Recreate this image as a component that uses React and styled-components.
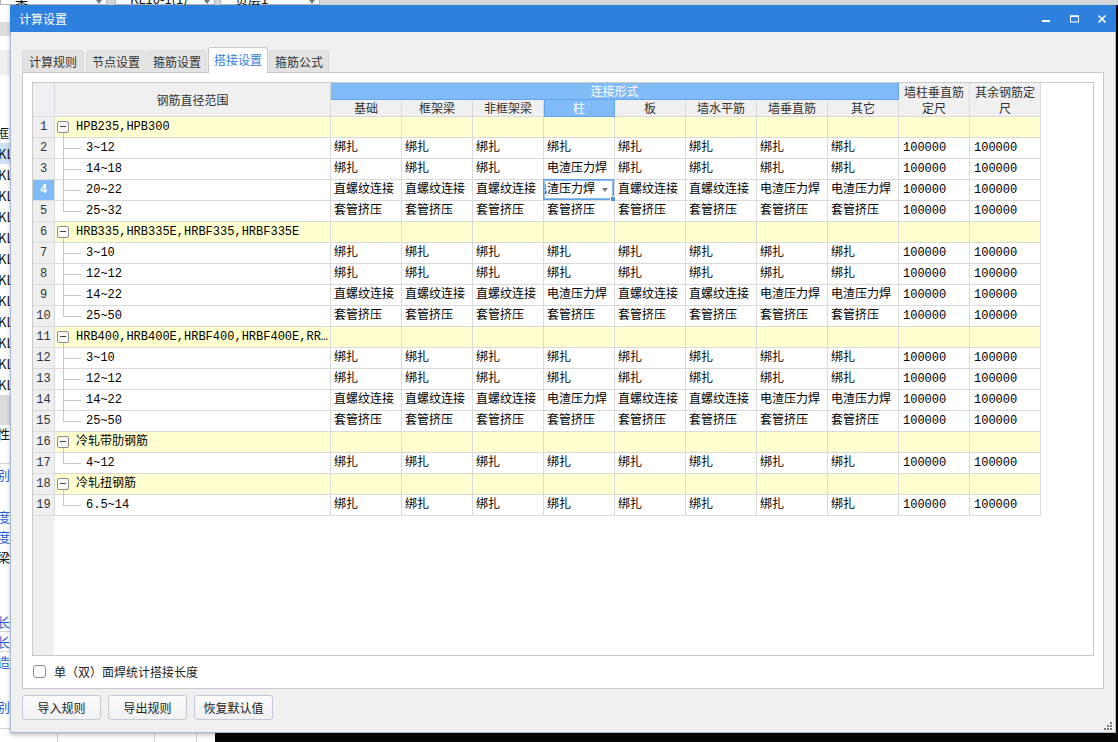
import React from "react";
import styled, { createGlobalStyle } from "styled-components";

const GlobalStyle = createGlobalStyle`
  html, body { margin: 0; padding: 0; }
  body {
    font-family: "Noto Sans CJK SC", "Noto Sans", sans-serif;
    font-size: 12px;
    color: #222;
  }
`;

const Screen = styled.div`
  position: relative;
  width: 1118px;
  height: 742px;
  overflow: hidden;
  background: #060606;
`;

/* ---------- the application behind the dialog ---------- */

const Backdrop = styled.div`
  display: flex;
  flex-direction: column;
  height: 100%;
`;

const TopStrip = styled.div`
  height: 5px;
  flex: none;
  display: flex;
  align-items: flex-end;
  background: #d4d6d9;
  overflow: hidden;
`;

const Combo = styled.div`
  width: ${({ $w }) => $w}px;
  margin-right: ${({ $gap }) => $gap}px;
  height: 20px;
  flex: none;
  box-sizing: border-box;
  background: #fff;
  border: 1px solid #b5b5b5;
  display: flex;
  align-items: flex-end;
  justify-content: space-between;
  padding: 0 4px 0 14px;
  font-size: 13px;
  line-height: 11px;
  color: #111;
`;

const Main = styled.div`
  flex: 1;
  display: flex;
  min-height: 0;
`;

const SidePane = styled.div`
  width: 215px;
  flex: none;
  background: #fff;
  display: flex;
  flex-direction: column;
  overflow: hidden;
`;

const SideRow = styled.div`
  height: ${({ $h }) => $h}px;
  flex: none;
  box-sizing: border-box;
  background: ${({ $bg }) => $bg || "#fff"};
  color: ${({ $blue }) => ($blue ? "#1a5fd6" : "#111")};
  font-size: 13px;
  line-height: ${({ $h }) => $h}px;
  white-space: nowrap;
  text-indent: ${({ $indent }) => $indent ?? -3}px;
  border-bottom: ${({ $line }) => ($line ? "1px solid #d6d6d6" : "none")};
`;

const SideGrid = styled.div`
  flex: 1;
  display: flex;
  border-top: 1px solid #d6d6d6;
`;

const SideCell = styled.div`
  width: ${({ $w }) => $w}px;
  flex: none;
  border-right: 1px solid #d2d2d2;
`;

const DarkArea = styled.div`
  flex: 1;
  background: #060606;
`;

/* ---------- dialog ---------- */

const Dialog = styled.div`
  position: absolute;
  left: 10px;
  top: 5px;
  width: 1106px;
  height: 728px;
  display: flex;
  flex-direction: column;
  box-shadow: 0 2px 4px rgba(0, 0, 0, 0.25);
`;

const TitleBar = styled.div`
  height: 27px;
  flex: none;
  background: #2e80df;
  color: #fff;
  display: flex;
  align-items: center;
  padding-left: 9px;
  font-size: 12px;
`;

const Title = styled.span`
  flex: 1;
  line-height: 27px;
`;

const WinButton = styled.div`
  width: 28px;
  height: 27px;
  display: flex;
  align-items: center;
  justify-content: center;
`;

const Body = styled.div`
  position: relative;
  flex: 1;
  background: #f0f0f0;
  border: 1px solid #a9bad2;
  border-top: none;
  padding: 15px 11px 0 11px;
  display: flex;
  flex-direction: column;
`;

const TabBar = styled.div`
  height: 26px;
  flex: none;
  display: flex;
  align-items: flex-end;
  gap: 1px;
  margin-bottom: -1px;
  position: relative;
  z-index: 1;
`;

const Tab = styled.div`
  width: ${({ $first }) => ($first ? 62 : 60)}px;
  margin-right: ${({ $first }) => ($first ? 1 : 0)}px;
  height: ${({ $active }) => ($active ? 26 : 22)}px;
  margin-bottom: ${({ $active }) => ($active ? 0 : 1)}px;
  box-sizing: border-box;
  text-align: center;
  border: 1px solid ${({ $active }) => ($active ? "#c9c9c9" : "#d9d9d9")};
  border-bottom: none;
  border-radius: 3px 3px 0 0;
  background: ${({ $active }) => ($active ? "#fff" : "#e3e3e3")};
  color: ${({ $active }) => ($active ? "#2e80df" : "#333")};
  font-size: 12px;
  line-height: ${({ $active }) => ($active ? 24 : 21)}px;
`;

const Panel = styled.div`
  background: #fff;
  border: 1px solid #c9c9c9;
  padding: 9px 9px 4px 9px;
`;

const Grid = styled.div`
  height: 574px;
  box-sizing: border-box;
  border: 1px solid #c9c9c9;
  background: linear-gradient(to right, #efefef 21px, #fff 21px);
  overflow: hidden;
`;

const Table = styled.table`
  border-collapse: separate;
  border-spacing: 0;
  table-layout: fixed;
  width: 1008px;
  font-family: "Liberation Mono", "Noto Sans CJK SC", monospace;
  font-size: 12px;
  color: #000;
`;

const Col = styled.col`
  width: ${({ $w }) => $w}px;
`;

const Head = styled.th`
  height: 16px;
  padding: 0;
  font-family: "Noto Sans CJK SC", sans-serif;
  font-weight: normal;
  font-size: 12px;
  line-height: 16px;
  text-align: center;
  color: ${({ $blue }) => ($blue ? "#fff" : "#333")};
  background: ${({ $blue, $corner }) => ($blue ? "#80bbf7" : $corner ? "#eef0f4" : "#f0f0f0")};
  border-right: 1px solid ${({ $blue }) => ($blue ? "#63a4ec" : "#dadada")};
  border-bottom: 1px solid ${({ $blue }) => ($blue ? "#63a4ec" : "#dadada")};
  box-shadow: ${({ $picked }) => ($picked ? "inset 1px 0 0 #63a4ec" : "none")};
`;

const RowNo = styled.td`
  height: 20px;
  padding: 0;
  text-align: center;
  line-height: 20px;
  background: ${({ $picked }) => ($picked ? "#80bbf7" : "#efefef")};
  color: ${({ $picked }) => ($picked ? "#fff" : "#333")};
  font-weight: ${({ $picked }) => ($picked ? "bold" : "normal")};
  border-right: 1px solid #dadada;
  border-bottom: 1px solid #dadada;
`;

const Cell = styled.td`
  position: relative;
  height: 20px;
  padding: 0 0 0 ${({ $pad }) => $pad ?? 3}px;
  line-height: 20px;
  white-space: nowrap;
  overflow: ${({ $visible }) => ($visible ? "visible" : "hidden")};
  background: ${({ $group }) => ($group ? "#ffffd0" : "#fff")};
  border-right: 1px solid #dadada;
  border-bottom: 1px solid #dadada;
`;

const Tree = styled.div`
  display: flex;
  align-items: center;
  height: 20px;
`;

const ExpandBox = styled.span`
  position: relative;
  width: 12px;
  height: 12px;
  flex: none;
  box-sizing: border-box;
  margin-left: 2px;
  margin-right: 7px;
  border: 1px solid #8e8e8e;
  border-radius: 2px;
  background: #fafafa;

  &::before {
    content: "";
    position: absolute;
    left: 2px;
    top: 4px;
    width: 6px;
    height: 1px;
    background: #444;
  }
  &::after {
    content: "";
    position: absolute;
    left: 5px;
    top: 11px;
    width: 1px;
    height: 6px;
    background: #c8c8c8;
  }
`;

const Branch = styled.span`
  position: relative;
  width: 26px;
  height: 20px;
  flex: none;
  margin-left: 2px;
  margin-right: 3px;

  &::before {
    content: "";
    position: absolute;
    left: 6px;
    top: -1px;
    width: 1px;
    height: ${({ $last }) => ($last ? "11px" : "22px")};
    background: #c8c8c8;
  }
  &::after {
    content: "";
    position: absolute;
    left: 6px;
    top: 10px;
    width: 18px;
    height: 1px;
    background: #c8c8c8;
  }
`;

const NameText = styled.span`
  overflow: hidden;
  text-overflow: ellipsis;
  white-space: nowrap;
  flex: 1;
  min-width: 0;
`;

const Editor = styled.div`
  display: flex;
  align-items: center;
  justify-content: flex-end;
  height: 20px;
  overflow: hidden;
  padding-right: 6px;
  gap: 7px;
`;

const Caret = styled.span`
  flex: none;
  width: 0;
  height: 0;
  border-left: 3px solid transparent;
  border-right: 3px solid transparent;
  border-top: 4px solid #777;
`;

const Focus = styled.div`
  position: absolute;
  left: -1px;
  top: -1px;
  right: 0;
  bottom: 0;
  border: 1px solid #5f9fe6;
  box-shadow: inset 0 0 0 1px #8fc0f0;
  pointer-events: none;
`;

const Handle = styled.div`
  position: absolute;
  right: -3px;
  bottom: -3px;
  width: 4px;
  height: 4px;
  background: #4d92e0;
  border: 1px solid #fff;
`;

const CheckRow = styled.label`
  margin-top: 2px;
  height: 26px;
  display: flex;
  align-items: center;
  gap: 8px;
  padding-left: 1px;
  font-size: 12px;
  color: #222;
`;

const CheckBox = styled.span`
  width: 13px;
  height: 13px;
  box-sizing: border-box;
  border: 1px solid #8d8d8d;
  border-radius: 3px;
  background: #fff;
`;

const ButtonRow = styled.div`
  display: flex;
  gap: 7px;
  margin-top: 6px;
`;

const Button = styled.button`
  width: 79px;
  height: 25px;
  padding: 0;
  border: 1px solid #c3cad6;
  border-radius: 3px;
  background: linear-gradient(#fbfbfb, #f1f1f1);
  font-family: "Noto Sans CJK SC", sans-serif;
  font-size: 12px;
  color: #222;
`;

const Grip = styled.svg`
  position: absolute;
  right: 3px;
  bottom: 2px;
`;

/* ---------- data ---------- */

const COLS = ["基础", "框架梁", "非框架梁", "柱", "板", "墙水平筋", "墙垂直筋", "其它"];
const B = "绑扎";
const Z = "直螺纹连接";
const D = "电渣压力焊";
const T = "套管挤压";
const all = (v) => Array(8).fill(v);
const mixed = [Z, Z, Z, D, Z, Z, D, D];

const ROWS = [
  { group: "HPB235,HPB300" },
  { name: "3~12", vals: all(B) },
  { name: "14~18", vals: [B, B, B, D, B, B, B, B] },
  { name: "20~22", vals: mixed, picked: true },
  { name: "25~32", vals: all(T), last: true },
  { group: "HRB335,HRB335E,HRBF335,HRBF335E" },
  { name: "3~10", vals: all(B) },
  { name: "12~12", vals: all(B) },
  { name: "14~22", vals: mixed },
  { name: "25~50", vals: all(T), last: true },
  { group: "HRB400,HRB400E,HRBF400,HRBF400E,RRB400" },
  { name: "3~10", vals: all(B) },
  { name: "12~12", vals: all(B) },
  { name: "14~22", vals: mixed },
  { name: "25~50", vals: all(T), last: true },
  { group: "冷轧带肋钢筋" },
  { name: "4~12", vals: all(B), last: true },
  { group: "冷轧扭钢筋" },
  { name: "6.5~14", vals: all(B), last: true },
];

const SIDE = [
  { h: 17 },
  { h: 14, bg: "#dcdcdc" },
  { h: 14 },
  { h: 25, bg: "#efefef" },
  { h: 47 },
  { h: 21, text: "框架", indent: -4 },
  { h: 21, text: "KL10-1", bg: "#cde0f6", indent: -2 },
  ...Array(11).fill({ h: 21, text: "KL10-1", indent: -2 }),
  { h: 30, bg: "#dcdcdc" },
  { h: 18, text: "性" },
  { h: 21, line: true },
  { h: 21, text: "别", blue: true },
  { h: 21 },
  { h: 21, text: "度", blue: true },
  { h: 20, text: "度", blue: true },
  { h: 19, text: "梁" },
  { h: 46 },
  { h: 20, text: "长", blue: true, line: true },
  { h: 20, text: "长", blue: true, line: true },
  { h: 20, text: "造", blue: true },
  { h: 24 },
  { h: 21, text: "别", blue: true },
  { h: 11 },
];

const TABS = ["计算规则", "节点设置", "箍筋设置", "搭接设置", "箍筋公式"];

const MinIcon = () => (
  <svg width="10" height="10" viewBox="0 0 10 10">
    <rect x="1" y="6" width="8" height="2" fill="#fff" />
  </svg>
);

const MaxIcon = () => (
  <svg width="10" height="10" viewBox="0 0 10 10">
    <rect x="1.5" y="2" width="8" height="6" fill="none" stroke="#fff" strokeWidth="1" />
    <rect x="1" y="1.5" width="9" height="1.5" fill="#fff" />
  </svg>
);

const CloseIcon = () => (
  <svg width="10" height="10" viewBox="0 0 10 10">
    <path d="M1.5 1.5 L8.5 8.5 M8.5 1.5 L1.5 8.5" stroke="#fff" strokeWidth="1.6" />
  </svg>
);

const DataRow = ({ row, n }) => (
  <tr>
    <RowNo $picked={row.picked}>{n}</RowNo>
    {row.group ? (
      <>
        <Cell $group $visible $pad={0}>
          <Tree>
            <ExpandBox />
            <NameText>{row.group}</NameText>
          </Tree>
        </Cell>
        {Array.from({ length: 10 }).map((_, i) => (
          <Cell key={i} $group />
        ))}
      </>
    ) : (
      <>
        <Cell $visible $pad={0}>
          <Tree>
            <Branch $last={row.last} />
            <NameText>{row.name}</NameText>
          </Tree>
        </Cell>
        {row.vals.map((v, i) =>
          row.picked && i === 3 ? (
            <Cell key={i} $pad={0} $visible>
              <Editor>
                <span>{v}</span>
                <Caret />
              </Editor>
              <Focus>
                <Handle />
              </Focus>
            </Cell>
          ) : (
            <Cell key={i}>{v}</Cell>
          )
        )}
        <Cell $pad={4}>100000</Cell>
        <Cell $pad={4}>100000</Cell>
      </>
    )}
  </tr>
);

export default function App() {
  return (
    <Screen>
      <GlobalStyle />
      <Backdrop>
        <TopStrip>
          <Combo $w={107} $gap={8}>
            <span>梁</span>
            <Caret />
          </Combo>
          <Combo $w={100} $gap={5}>
            <span>KL10-1(1)</span>
            <Caret />
          </Combo>
          <Combo $w={100} $gap={0}>
            <span>负层1</span>
            <Caret />
          </Combo>
        </TopStrip>
        <Main>
          <SidePane>
            {SIDE.map((r, i) => (
              <SideRow
                key={i}
                $h={r.h}
                $bg={r.bg}
                $blue={r.blue}
                $line={r.line}
                $indent={r.indent}
              >
                {r.text}
              </SideRow>
            ))}
            <SideGrid>
              <SideCell $w={57} />
              <SideCell $w={96} />
              <SideCell $w={41} />
            </SideGrid>
          </SidePane>
          <DarkArea />
        </Main>
      </Backdrop>

      <Dialog>
        <TitleBar>
          <Title>计算设置</Title>
          <WinButton>
            <MinIcon />
          </WinButton>
          <WinButton>
            <MaxIcon />
          </WinButton>
          <WinButton>
            <CloseIcon />
          </WinButton>
        </TitleBar>
        <Body>
          <TabBar>
            {TABS.map((t, i) => (
              <Tab key={t} $first={i === 0} $active={t === "搭接设置"}>
                {t}
              </Tab>
            ))}
          </TabBar>
          <Panel>
            <Grid>
              <Table>
                <colgroup>
                  <Col $w={22} />
                  <Col $w={276} />
                  {Array.from({ length: 10 }).map((_, i) => (
                    <Col key={i} $w={71} />
                  ))}
                </colgroup>
                <thead>
                  <tr>
                    <Head rowSpan={2} $corner />
                    <Head rowSpan={2}>钢筋直径范围</Head>
                    <Head colSpan={8} $blue>
                      连接形式
                    </Head>
                    <Head rowSpan={2}>墙柱垂直筋定尺</Head>
                    <Head rowSpan={2}>其余钢筋定尺</Head>
                  </tr>
                  <tr>
                    {COLS.map((c) => (
                      <Head key={c} $blue={c === "柱"} $picked={c === "柱"}>
                        {c}
                      </Head>
                    ))}
                  </tr>
                </thead>
                <tbody>
                  {ROWS.map((r, i) => (
                    <DataRow key={i} row={r} n={i + 1} />
                  ))}
                </tbody>
              </Table>
            </Grid>
            <CheckRow>
              <CheckBox />
              单（双）面焊统计搭接长度
            </CheckRow>
          </Panel>
          <ButtonRow>
            <Button>导入规则</Button>
            <Button>导出规则</Button>
            <Button>恢复默认值</Button>
          </ButtonRow>
          <Grip width="9" height="9" viewBox="0 0 9 9">
            <rect x="7" y="1" width="2" height="2" fill="#777" />
            <rect x="4" y="4" width="2" height="2" fill="#777" />
            <rect x="7" y="4" width="2" height="2" fill="#777" />
            <rect x="1" y="7" width="2" height="2" fill="#777" />
            <rect x="4" y="7" width="2" height="2" fill="#777" />
            <rect x="7" y="7" width="2" height="2" fill="#777" />
          </Grip>
        </Body>
      </Dialog>
    </Screen>
  );
}
